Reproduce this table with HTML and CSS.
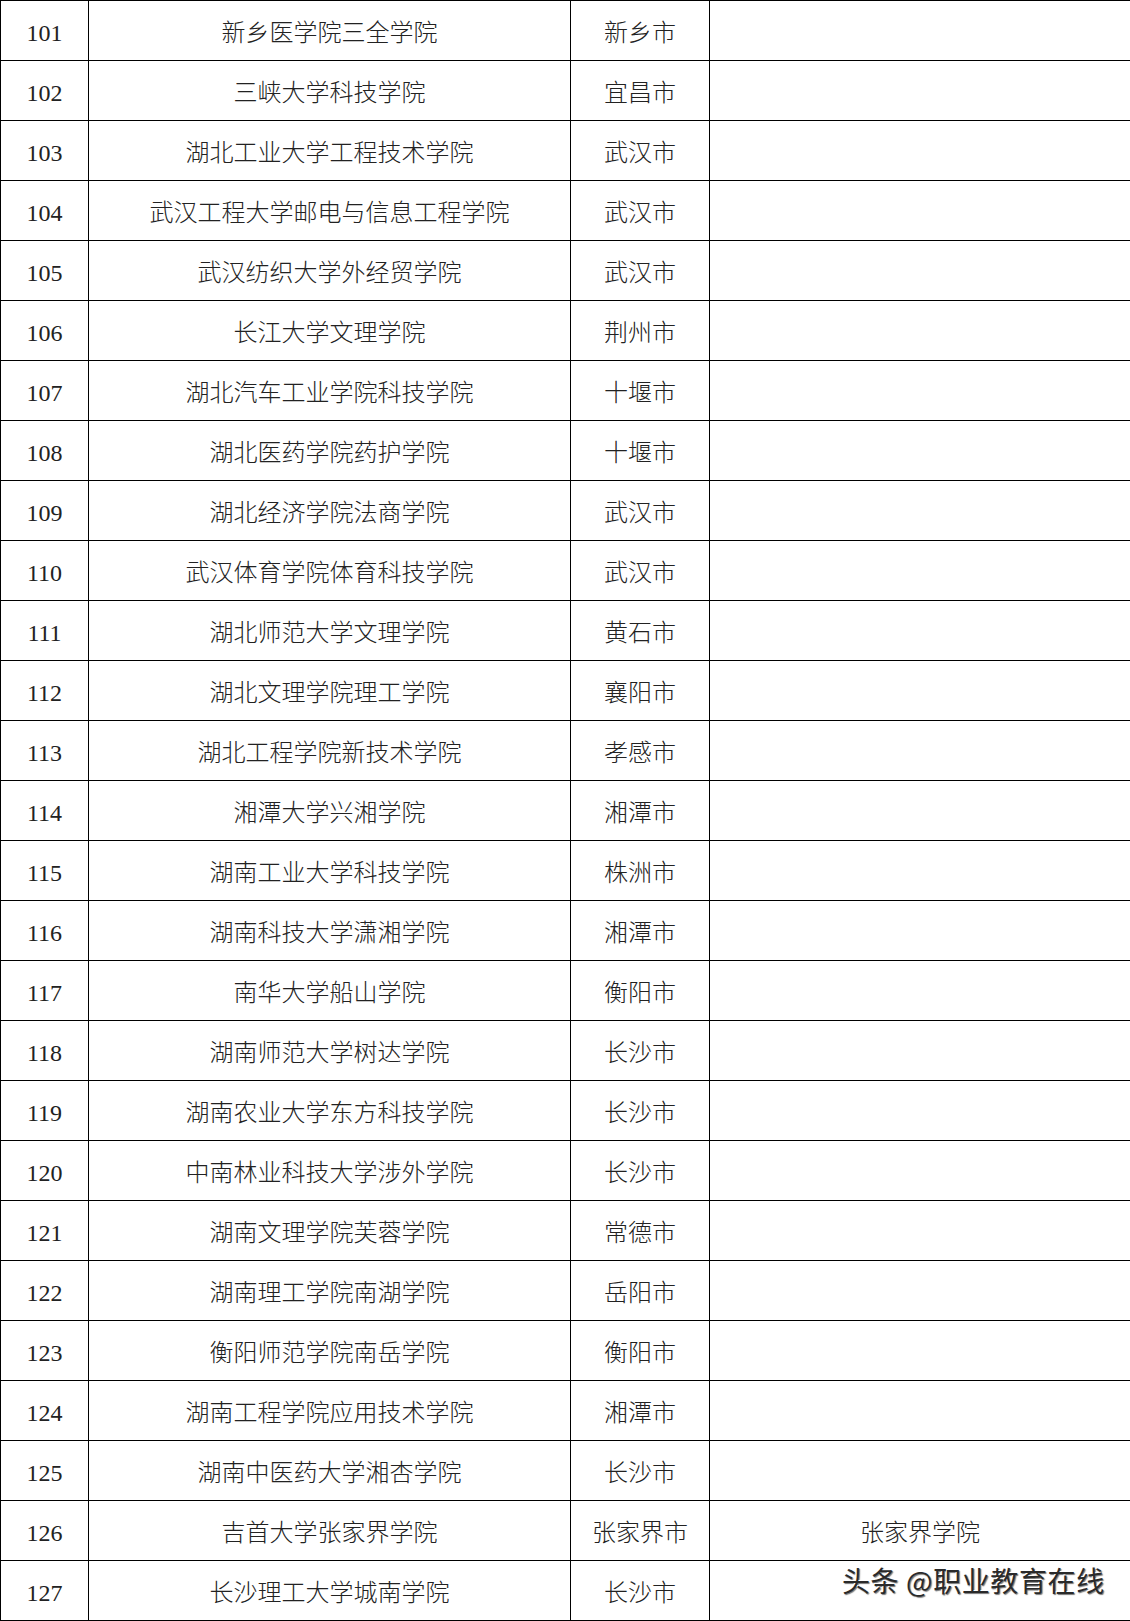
FILE: index.html
```html
<!DOCTYPE html>
<html lang="zh-CN">
<head>
<meta charset="utf-8">
<title>名单</title>
<link rel="stylesheet" href="styles.css">
</head>
<body>
<div class="page">
<table class="list">
<colgroup><col class="c-no"><col class="c-name"><col class="c-city"><col class="c-note"></colgroup>
<tbody>
<tr><td class="no">101</td><td>新乡医学院三全学院</td><td>新乡市</td><td></td></tr>
<tr><td class="no">102</td><td>三峡大学科技学院</td><td>宜昌市</td><td></td></tr>
<tr><td class="no">103</td><td>湖北工业大学工程技术学院</td><td>武汉市</td><td></td></tr>
<tr><td class="no">104</td><td>武汉工程大学邮电与信息工程学院</td><td>武汉市</td><td></td></tr>
<tr><td class="no">105</td><td>武汉纺织大学外经贸学院</td><td>武汉市</td><td></td></tr>
<tr><td class="no">106</td><td>长江大学文理学院</td><td>荆州市</td><td></td></tr>
<tr><td class="no">107</td><td>湖北汽车工业学院科技学院</td><td>十堰市</td><td></td></tr>
<tr><td class="no">108</td><td>湖北医药学院药护学院</td><td>十堰市</td><td></td></tr>
<tr><td class="no">109</td><td>湖北经济学院法商学院</td><td>武汉市</td><td></td></tr>
<tr><td class="no">110</td><td>武汉体育学院体育科技学院</td><td>武汉市</td><td></td></tr>
<tr><td class="no">111</td><td>湖北师范大学文理学院</td><td>黄石市</td><td></td></tr>
<tr><td class="no">112</td><td>湖北文理学院理工学院</td><td>襄阳市</td><td></td></tr>
<tr><td class="no">113</td><td>湖北工程学院新技术学院</td><td>孝感市</td><td></td></tr>
<tr><td class="no">114</td><td>湘潭大学兴湘学院</td><td>湘潭市</td><td></td></tr>
<tr><td class="no">115</td><td>湖南工业大学科技学院</td><td>株洲市</td><td></td></tr>
<tr><td class="no">116</td><td>湖南科技大学潇湘学院</td><td>湘潭市</td><td></td></tr>
<tr><td class="no">117</td><td>南华大学船山学院</td><td>衡阳市</td><td></td></tr>
<tr><td class="no">118</td><td>湖南师范大学树达学院</td><td>长沙市</td><td></td></tr>
<tr><td class="no">119</td><td>湖南农业大学东方科技学院</td><td>长沙市</td><td></td></tr>
<tr><td class="no">120</td><td>中南林业科技大学涉外学院</td><td>长沙市</td><td></td></tr>
<tr><td class="no">121</td><td>湖南文理学院芙蓉学院</td><td>常德市</td><td></td></tr>
<tr><td class="no">122</td><td>湖南理工学院南湖学院</td><td>岳阳市</td><td></td></tr>
<tr><td class="no">123</td><td>衡阳师范学院南岳学院</td><td>衡阳市</td><td></td></tr>
<tr><td class="no">124</td><td>湖南工程学院应用技术学院</td><td>湘潭市</td><td></td></tr>
<tr><td class="no">125</td><td>湖南中医药大学湘杏学院</td><td>长沙市</td><td></td></tr>
<tr><td class="no">126</td><td>吉首大学张家界学院</td><td>张家界市</td><td>张家界学院</td></tr>
<tr><td class="no">127</td><td>长沙理工大学城南学院</td><td>长沙市</td><td></td></tr>
</tbody>
</table>
<div class="watermark">头条 @职业教育在线</div>
</div>
</body>
</html>
```
FILE: styles.css
```css
html, body {
  margin: 0;
  padding: 0;
  background: #fff;
}
.page {
  position: relative;
  width: 1130px;
}
.list {
  width: 1130px;
  border-collapse: collapse;
  table-layout: fixed;
  font-family: "Liberation Serif", "Noto Sans CJK SC", serif;
  font-weight: 300;
  color: #222;
}
.c-no { width: 88px; }
.c-name { width: 482px; }
.c-city { width: 139px; }
.c-note { width: 421px; }
.list tr { height: 60px; }
.list td {
  border: 1px solid #000;
  padding: 4px 0 0 0;
  text-align: center;
  vertical-align: middle;
  font-size: 24px;
  line-height: 30px;
  white-space: nowrap;
}
.list td.no {
  font-size: 24px;
  padding-top: 4px;
}
.watermark {
  position: absolute;
  left: 842px;
  top: 1562px;
  font-family: "Noto Sans CJK SC", sans-serif;
  font-size: 28px;
  letter-spacing: 0.6px;
  line-height: 36px;
  color: #2a2a2a;
  white-space: nowrap;
  text-shadow: -1px -1px 0 #fff, 1px 1px 1px #777;
}
```
